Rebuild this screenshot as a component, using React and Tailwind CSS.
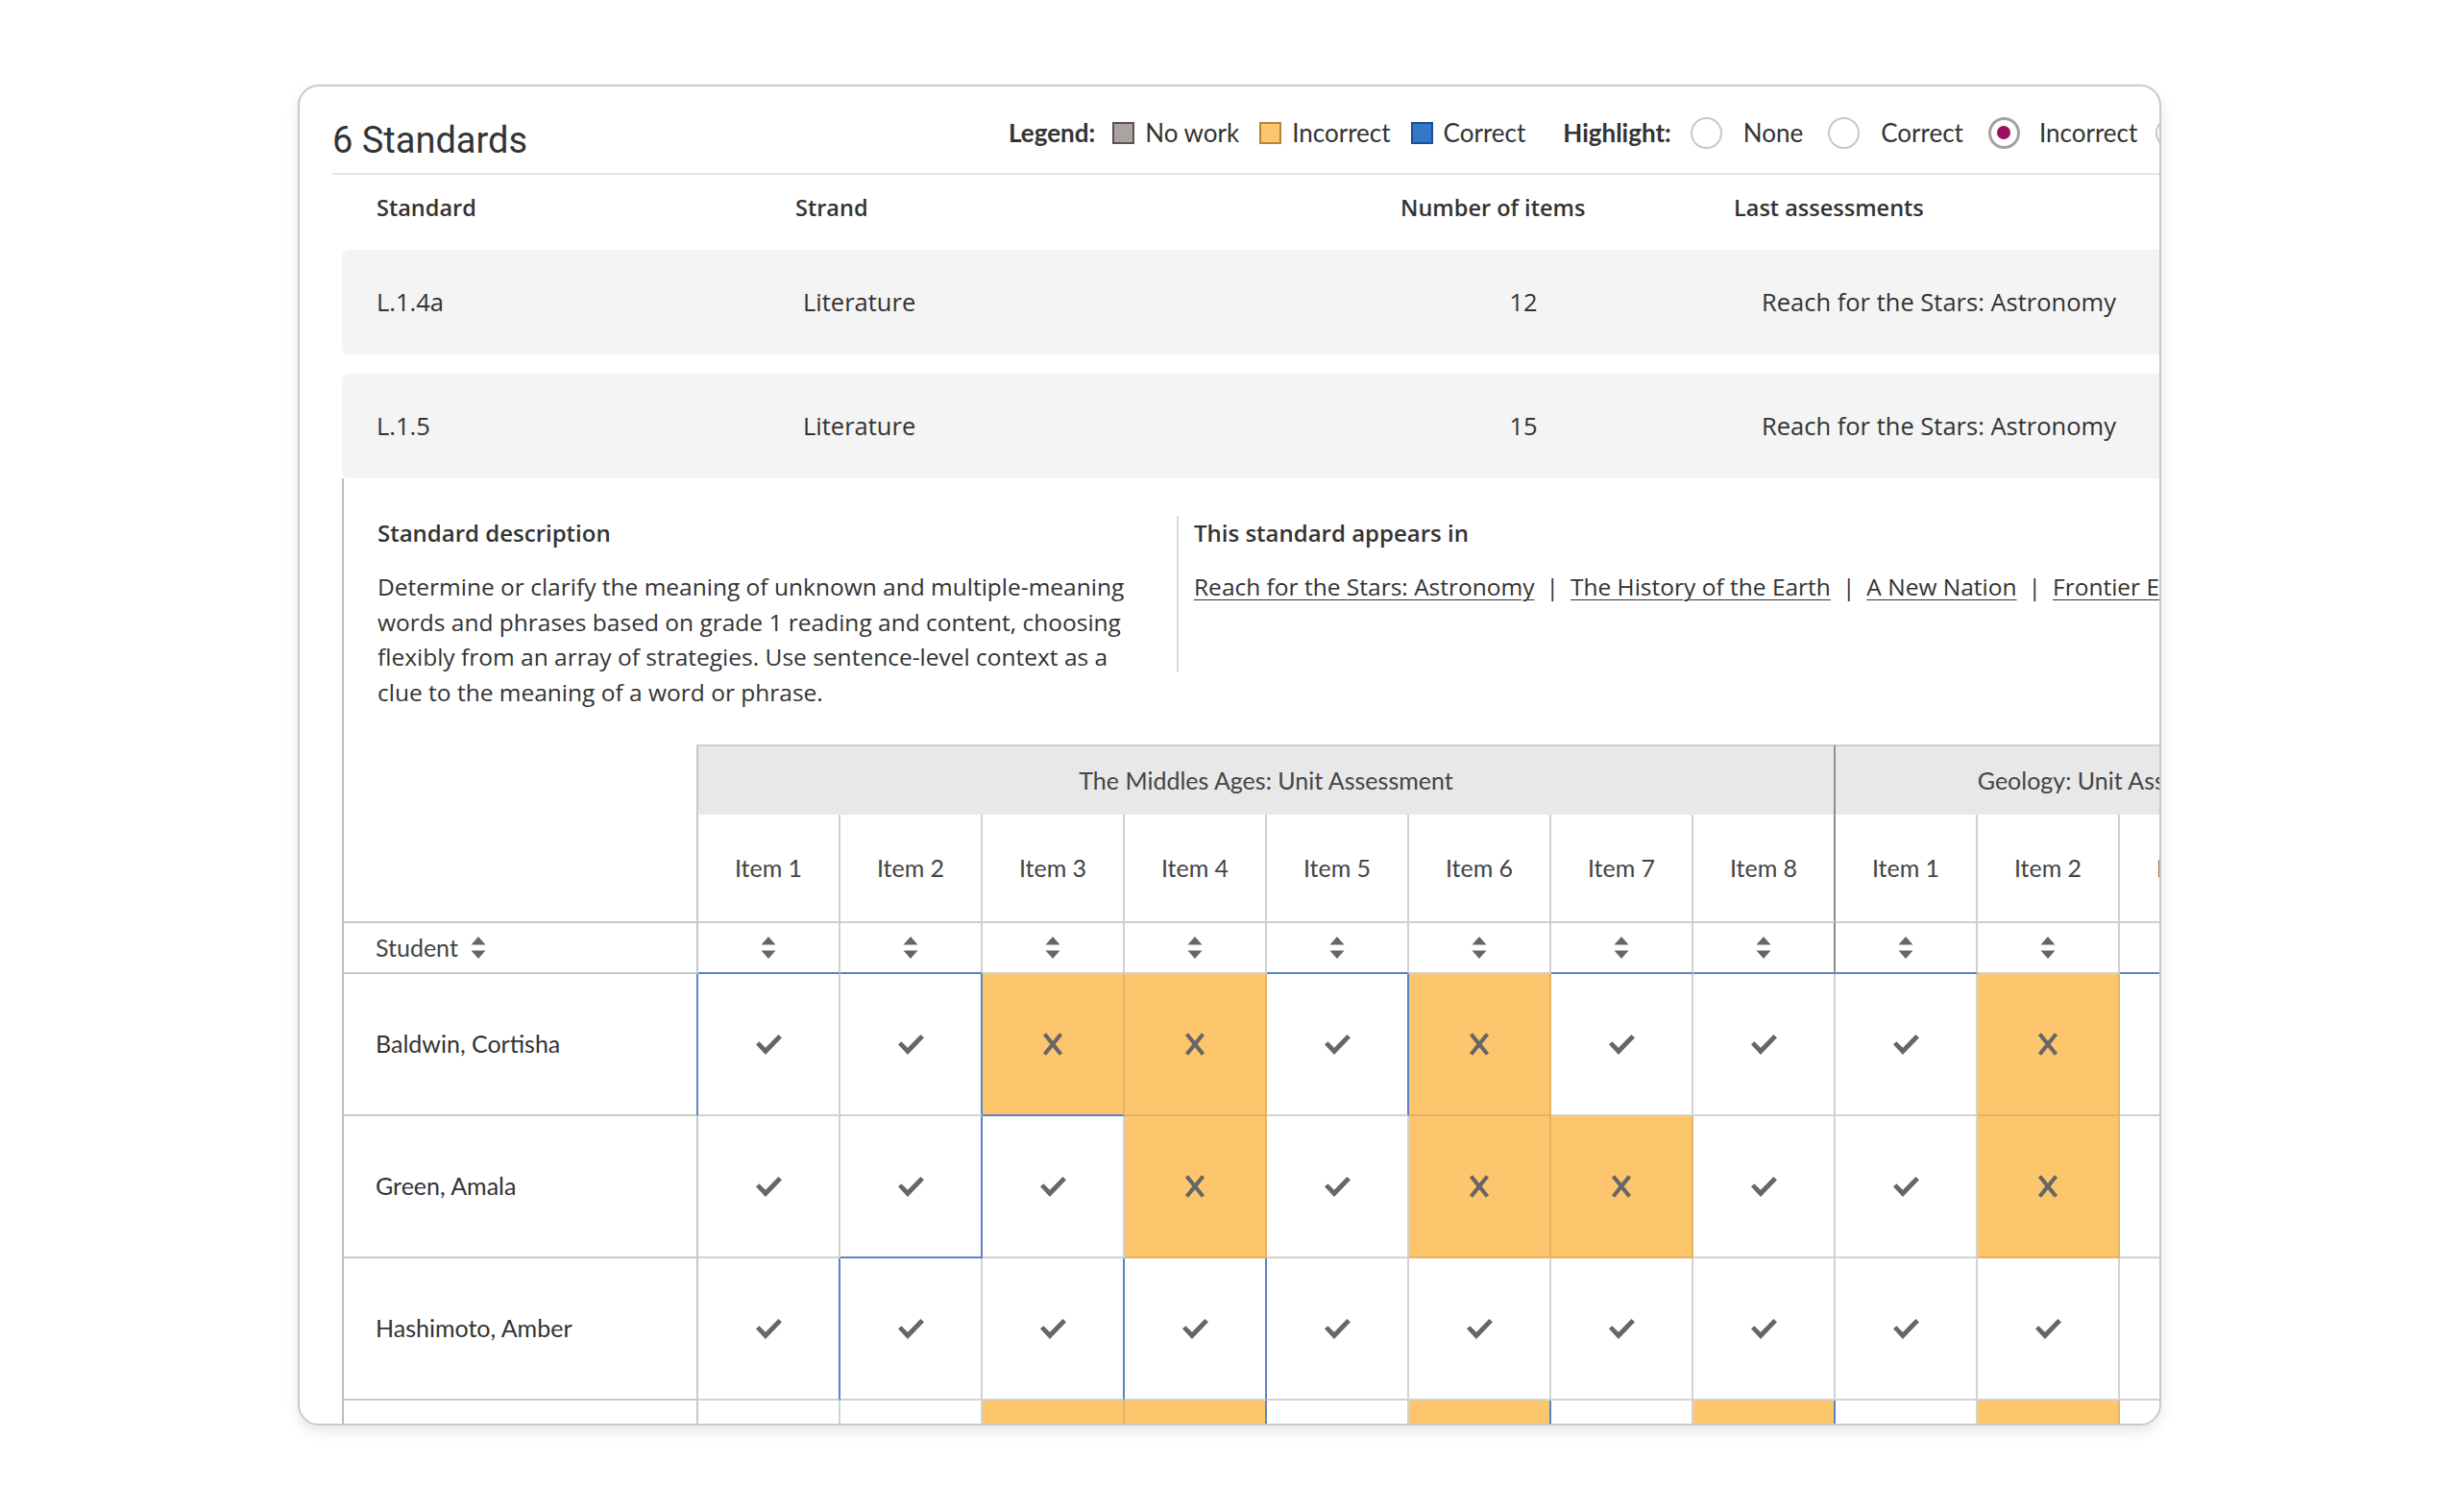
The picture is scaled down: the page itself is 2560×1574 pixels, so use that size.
import { Fragment } from 'react';

const BLUE = '#5a84bf';
const LINE = '#d2d2d2';
const ORANGE_LINE = '#e3b366';

const items = ['Item 1', 'Item 2', 'Item 3', 'Item 4', 'Item 5', 'Item 6', 'Item 7', 'Item 8', 'Item 1', 'Item 2', 'Item 3', 'Item 4'];

// C = correct, X = incorrect
const students = [
  { name: 'Baldwin, Cortisha', res: 'CCXXCXCC' + 'CXCC', blueRight: [1, 4], blueBottom: [2], studentBlue: true },
  { name: 'Green, Amala', res: 'CCCXCXXC' + 'CXCC', blueRight: [1], blueBottom: [1] },
  { name: 'Hashimoto, Amber', res: 'CCCCCCCC' + 'CCCC', blueRight: [0, 2, 3], blueBottom: [] },
  { name: 'Jackson, Lena', res: 'CCXXCXCX' + 'CXCC', blueRight: [3, 5, 7], blueBottom: [] },
];

const sortBlue = [0, 1, 4, 6, 7, 8, 10, 11];

const links = ['Reach for the Stars: Astronomy', 'The History of the Earth', 'A New Nation', 'Frontier Explorers'];

function Check() {
  return (
    <svg width="27" height="21" viewBox="0 0 26 20" className="block">
      <path d="M0 9.8 L3.3 6.8 L9.6 13.2 L22.5 0 L26 3 L9.6 20 Z" fill="#666" />
    </svg>
  );
}

function Cross() {
  return (
    <svg width="24" height="24" viewBox="0 0 24 24" className="block">
      <path d="M3.5 1.5 L20.5 22.5 M20.5 1.5 L3.5 22.5" stroke="#666" strokeWidth="4.2" fill="none" />
    </svg>
  );
}

function SortIcon() {
  return (
    <svg width="16" height="23" viewBox="0 0 16 23" className="block">
      <path d="M8 0 L15.5 8.5 L0.5 8.5 Z M0.5 14.5 L15.5 14.5 L8 23 Z" fill="#666" />
    </svg>
  );
}

function Radio({ checked }) {
  if (checked) {
    return (
      <span className="w-[33px] h-[33px] shrink-0 rounded-full border-[3px] border-[#a3a3a3] flex items-center justify-center">
        <span className="w-[14px] h-[14px] rounded-full bg-[#9b0f5f]" />
      </span>
    );
  }
  return <span className="w-[33px] h-[33px] shrink-0 rounded-full border-2 border-[#c8c8c8]" />;
}

function Legend() {
  return (
    <div className="mt-[31px] h-[34px] flex items-center font-['Lato',sans-serif] text-[26px] text-[#333] whitespace-nowrap">
      <span className="font-bold mr-[18px]">Legend:</span>
      <span className="w-[23px] h-[23px] shrink-0 border-2 border-[#5a5352] bg-[#aba3a1] mr-[11px]" />
      <span className="mr-[21px]">No work</span>
      <span className="w-[23px] h-[23px] shrink-0 border-2 border-[#b8843a] bg-[#fdc66d] mr-[11px]" />
      <span className="mr-[21px]">Incorrect</span>
      <span className="w-[23px] h-[23px] shrink-0 border-2 border-[#1d4f8c] bg-[#2f78ca] mr-[11px]" />
      <span className="mr-[39px]">Correct</span>
      <span className="font-bold mr-[20px]">Highlight:</span>
      <Radio />
      <span className="ml-[22px] mr-[26px]">None</span>
      <Radio />
      <span className="ml-[22px] mr-[26px]">Correct</span>
      <Radio checked />
      <span className="ml-[20px] mr-[19px]">Incorrect</span>
      <Radio />
    </div>
  );
}

function StandardRow({ code, strand, count, last, className = '' }) {
  return (
    <div className={`w-[2000px] h-[109px] rounded-[8px] bg-[#f4f4f4] flex items-center pl-[36px] text-[25.5px] text-[#333] whitespace-nowrap ${className}`}>
      <span className="w-[444px] shrink-0">{code}</span>
      <span className="w-[700px] shrink-0">{strand}</span>
      <span className="w-[100px] shrink-0 text-center">{count}</span>
      <span className="ml-[198px]">{last}</span>
    </div>
  );
}

function ItemTable() {
  return (
    <div className="mt-[36px] font-['Lato',sans-serif] text-[25px] text-[#444] whitespace-nowrap">
      {/* assessment group header */}
      <div className="flex h-[73px]">
        <div className="w-[369px] shrink-0 border-r-2 border-[#c8c8c8]" />
        <div className="w-[1184px] shrink-0 border-t-2 border-r-2 border-t-[#cfcfcf] border-r-[#8c8c8c] bg-[#e8e8e8] flex items-center justify-center">
          The Middles Ages: Unit Assessment
        </div>
        <div className="w-[592px] shrink-0 border-t-2 border-r-2 border-t-[#cfcfcf] border-r-[#8c8c8c] bg-[#e8e8e8] flex items-center justify-center pr-[8px]">
          Geology: Unit Assessment
        </div>
        <div className="w-[600px] shrink-0 border-t-2 border-[#cfcfcf] bg-[#e8e8e8]" />
      </div>

      {/* item names */}
      <div className="flex h-[111px]">
        <div className="w-[369px] shrink-0 border-r-2 border-[#c8c8c8]" />
        {items.map((it, i) => (
          <div
            key={i}
            className={`w-[148px] shrink-0 border-r-2 flex items-center justify-center ${i === 7 ? 'border-[#8c8c8c]' : 'border-[#d0d0d0]'}`}
          >
            {it}
          </div>
        ))}
      </div>

      {/* sort row */}
      <div className="flex h-[55px]">
        <div className="w-[369px] shrink-0 border-t-2 border-b-2 border-r-2 border-[#c8c8c8] flex items-center pl-[33px]">
          <span>Student</span>
          <span className="ml-[13px]"><SortIcon /></span>
        </div>
        {items.map((_, i) => (
          <div
            key={i}
            className={`w-[148px] shrink-0 border-t-2 border-b-2 border-r-2 border-t-[#cfcfcf] flex items-center justify-center ${
              sortBlue.includes(i) ? 'border-b-[#5a84bf]' : 'border-b-[#cfcfcf]'
            } ${i === 7 ? 'border-r-[#8c8c8c]' : 'border-r-[#d0d0d0]'}`}
          >
            <SortIcon />
          </div>
        ))}
      </div>

      {/* student rows */}
      {students.map((s) => (
        <div key={s.name} className="flex h-[148px]">
          <div
            className="w-[369px] shrink-0 border-b-2 border-r-2 border-b-[#c8c8c8] flex items-center pl-[33px] text-[#333]"
            style={{ borderRightColor: s.studentBlue ? BLUE : '#c8c8c8' }}
          >
            {s.name}
          </div>
          {s.res.split('').map((r, i) => {
            const wrong = r === 'X';
            const base = wrong ? ORANGE_LINE : LINE;
            return (
              <div
                key={i}
                className={`w-[148px] shrink-0 border-b-2 border-r-2 flex items-center justify-center ${wrong ? 'bg-[#fdc66d]' : 'bg-white'}`}
                style={{
                  borderRightColor: s.blueRight.includes(i) ? BLUE : base,
                  borderBottomColor: s.blueBottom.includes(i) ? BLUE : base,
                }}
              >
                {wrong ? <Cross /> : <Check />}
              </div>
            );
          })}
        </div>
      ))}
    </div>
  );
}

export default function App() {
  return (
    <div className="min-h-screen bg-white pt-[88px] pl-[310px]">
      <div className="w-[1940px] h-[1396px] rounded-[22px] border-2 border-[#c9c9c9] bg-white overflow-hidden shadow-[0_6px_14px_rgba(0,0,0,0.10)] font-['Open_Sans',sans-serif] text-[#333]">
        {/* title + legend */}
        <div className="ml-[34px] w-[2000px] h-[92px] border-b-2 border-[#e6e6e6] flex items-start">
          <h1 className="mt-[36px] w-[704px] shrink-0 font-['Roboto',sans-serif] text-[38px] leading-[40px] font-normal text-[#333]">6 Standards</h1>
          <Legend />
        </div>

        <div className="pl-[44px]">
          {/* column labels */}
          <div className="h-[78px] pb-[8px] pl-[36px] flex items-center text-[23.5px] font-semibold text-[#333] whitespace-nowrap">
            <span className="w-[436px] shrink-0">Standard</span>
            <span className="w-[630px] shrink-0">Strand</span>
            <span className="w-[347px] shrink-0">Number of items</span>
            <span>Last assessments</span>
          </div>

          <StandardRow code="L.1.4a" strand="Literature" count="12" last="Reach for the Stars: Astronomy" />
          <StandardRow code="L.1.5" strand="Literature" count="15" last="Reach for the Stars: Astronomy" className="mt-[20px]" />

          {/* expanded standard */}
          <div className="w-[2200px] border-l-2 border-[#bdbdbd] pt-[39px] pb-[40px]">
            <div className="flex items-start">
              <div className="w-[867px] shrink-0 pl-[35px] pr-[27px]">
                <h3 className="text-[24px] leading-[36px] font-semibold">Standard description</h3>
                <p className="mt-[20px] text-[24.5px] leading-[36.5px]">
                  Determine or clarify the meaning of unknown and multiple-meaning words and phrases based on grade 1 reading and content, choosing flexibly from an array of strategies. Use sentence-level context as a clue to the meaning of a word or phrase.
                </p>
              </div>
              <div className="h-[162px] shrink-0 border-l-2 border-[#d9d9d9] pl-[16px] whitespace-nowrap">
                <h3 className="text-[24px] leading-[36px] font-semibold">This standard appears in</h3>
                <div className="mt-[20px] flex text-[24.5px] leading-[36px]">
                  {links.map((l, i) => (
                    <Fragment key={l}>
                      {i > 0 && <span className="mx-[12px]">|</span>}
                      <a href="#" className="underline underline-offset-[4px] decoration-1">{l}</a>
                    </Fragment>
                  ))}
                </div>
              </div>
            </div>

            <ItemTable />
          </div>
        </div>
      </div>
    </div>
  );
}
